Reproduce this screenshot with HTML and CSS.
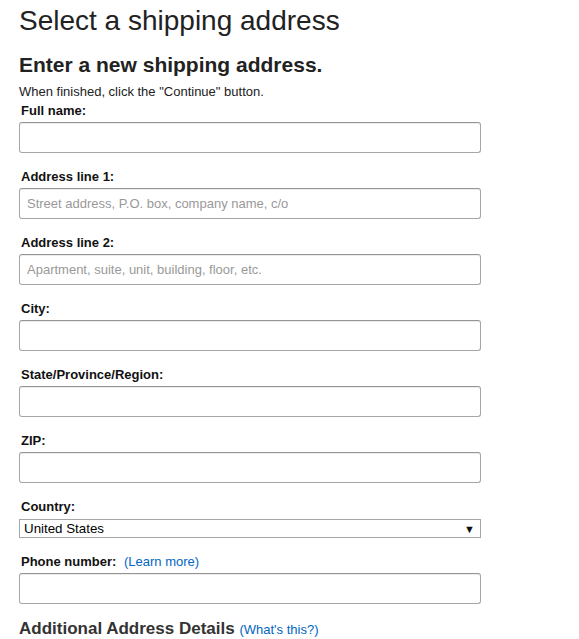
FILE: index.html
```html
<!DOCTYPE html>
<html lang="en">
<head>
<meta charset="utf-8">
<title>Select a shipping address</title>
<link rel="stylesheet" href="styles.css">
</head>
<body>
<div class="page">
  <h1 class="title">Select a shipping address</h1>
  <h2 class="subtitle">Enter a new shipping address.</h2>
  <p class="hint">When finished, click the "Continue" button.</p>
  <form class="form">
    <div class="row">
      <label class="label">Full name:</label>
      <input class="field" type="text">
    </div>
    <div class="row">
      <label class="label">Address line 1:</label>
      <input class="field" type="text" placeholder="Street address, P.O. box, company name, c/o">
    </div>
    <div class="row">
      <label class="label">Address line 2:</label>
      <input class="field" type="text" placeholder="Apartment, suite, unit, building, floor, etc.">
    </div>
    <div class="row">
      <label class="label">City:</label>
      <input class="field" type="text">
    </div>
    <div class="row">
      <label class="label">State/Province/Region:</label>
      <input class="field" type="text">
    </div>
    <div class="row">
      <label class="label">ZIP:</label>
      <input class="field" type="text">
    </div>
    <div class="row row-select">
      <label class="label">Country:</label>
      <div class="select">
        <span class="select-value">United States</span>
        <span class="select-arrow">&#9660;</span>
      </div>
    </div>
    <div class="row">
      <label class="label">Phone number: <a class="link" href="#">(Learn more)</a></label>
      <input class="field" type="text">
    </div>
    <h3 class="section">Additional Address Details <a class="link link-small" href="#">(What's this?)</a></h3>
  </form>
</div>
</body>
</html>
```

FILE: styles.css
```css
html, body {
  margin: 0;
  padding: 0;
  background: #fff;
}
body {
  font-family: "Liberation Sans", Arial, sans-serif;
  color: #111;
  font-size: 13px;
}
.page {
  padding: 4px 19px 0 19px;
  width: 462px;
}
.title {
  margin: 0;
  font-size: 28px;
  line-height: 34px;
  font-weight: 400;
  color: #222;
}
.subtitle {
  margin: 13px 0 0 0;
  font-size: 21px;
  line-height: 27px;
  font-weight: 700;
  color: #222;
}
.hint {
  margin: 4px 0 0 0;
  font-size: 13px;
  line-height: 19px;
  color: #222;
}
.form {
  margin: 0;
}
.row {
  display: flex;
  flex-direction: column;
  margin-bottom: 14px;
}
.label {
  display: block;
  padding-left: 2px;
  font-size: 13px;
  line-height: 19px;
  font-weight: 700;
  color: #111;
  margin-bottom: 2px;
}
.link {
  color: #0066c0;
  font-weight: 400;
  text-decoration: none;
  margin-left: 4px;
}
.field {
  box-sizing: border-box;
  width: 462px;
  height: 31px;
  margin: 0;
  padding: 3px 7px;
  border: 1px solid #a6a6a6;
  border-top-color: #949494;
  border-radius: 3px;
  box-shadow: 0 1px 0 rgba(255,255,255,.5), 0 1px 0 rgba(0,0,0,.07) inset;
  font-family: "Liberation Sans", Arial, sans-serif;
  font-size: 13px;
  color: #111;
  background: #fff;
  outline: none;
}
.field::placeholder {
  color: #999;
}
.row-select .label {
  margin-bottom: 3px;
}
.select {
  box-sizing: border-box;
  width: 462px;
  height: 19px;
  border: 1px solid #a6a6a6;
  display: flex;
  align-items: center;
  justify-content: space-between;
  padding: 0 5px 0 4px;
  font-size: 13.33px;
  color: #000;
  background: #fff;
}
.select-arrow {
  font-size: 11px;
  color: #111;
}
.section {
  margin: 12px 0 0 0;
  font-size: 17px;
  line-height: 22px;
  font-weight: 700;
  color: #333;
}
.link-small {
  font-size: 13px;
  margin-left: 0;
}
```
